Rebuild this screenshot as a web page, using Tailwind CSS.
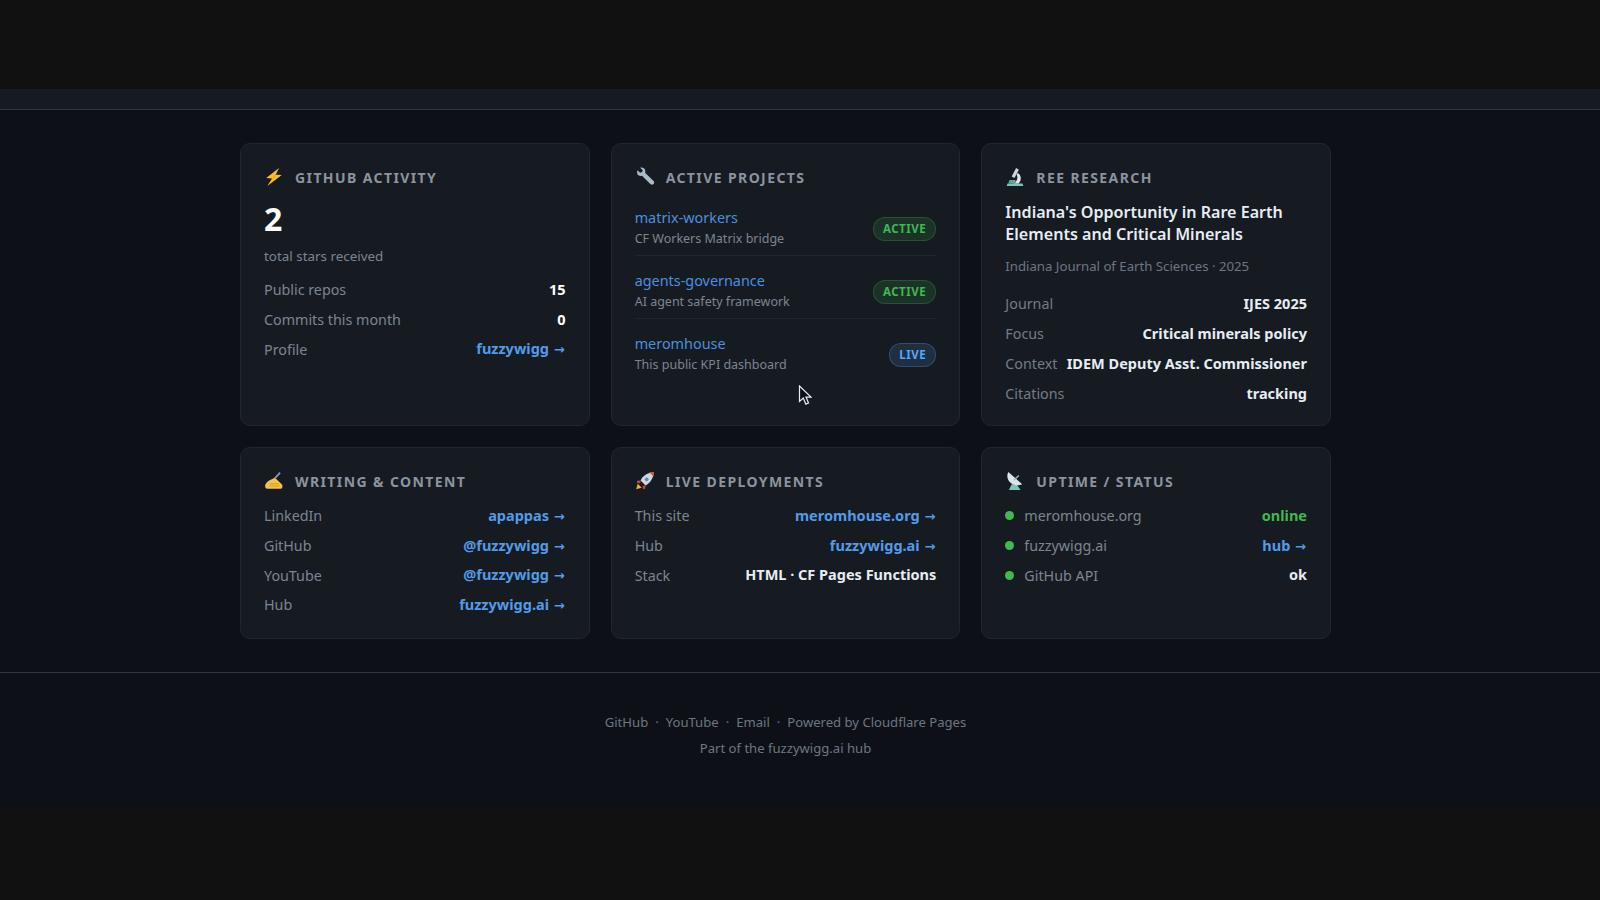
<!DOCTYPE html>
<html lang="en">

<head>
  <meta charset="UTF-8" />
  <title>meromhouse</title>
  <script src="https://cdn.jsdelivr.net/npm/@tailwindcss/browser@4"></script>
</head>

<body class="bg-[#111111] text-[#e6edf3] font-['Noto_Sans',sans-serif] overflow-hidden">

  <!-- Top band -->
  <div class="h-[89px] bg-[#111111]"></div>

  <!-- Header strip -->
  <div class="h-[21px] bg-[#161b22] border-b border-[#30363d]"></div>

  <div class="bg-[#0d1117] h-[700px] relative">

    <!-- Cards -->
    <main class="w-[1091px] ml-[240px] pt-[33px] grid grid-cols-3 gap-x-[21px] gap-y-[21px]">

      <!-- GitHub activity -->
      <section class="h-[283px] bg-[#161b22] border border-[#21262d] rounded-[10px] px-[23px] pt-[23px]">
        <h2 class="flex items-center gap-[11px] h-[20px] text-[14px] font-bold tracking-[1.4px] text-[#8b949e] uppercase">
          <svg class="w-[20px] h-[20px]" viewBox="0 0 18 18"><path d="M13.500 1 2 10l5.200.300L3 17 16 7.300l-5.600-.300z" fill="#f5c02c"/><path d="M13.500 1 7.800 10.500 3 17 9.500 9.300z" fill="#e8971e"/></svg>
          GitHub Activity
        </h2>
        <div class="mt-[14px] h-[36px] leading-[36px] text-[32px] font-bold text-white">2</div>
        <p class="mt-[10px] h-[18px] leading-[18px] text-[13.4px] text-[#7d8590]">total stars received</p>
        <div class="mt-[10px]">
          <div class="flex justify-between items-center h-[29.7px] text-[14.3px]"><span class="text-[#7d8590]">Public repos</span><span class="text-[14.5px] font-bold text-white">15</span></div>
          <div class="flex justify-between items-center h-[29.7px] text-[14.3px]"><span class="text-[#7d8590]">Commits this month</span><span class="text-[14.5px] font-bold text-white">0</span></div>
          <div class="flex justify-between items-center h-[29.7px] text-[14.3px]"><span class="text-[#7d8590]">Profile</span><a href="#" class="text-[14.5px] font-bold text-[#539be8]">fuzzywigg <span class="font-['DejaVu_Sans'] text-[13px] ml-[1px] mr-[1px]">→</span></a></div>
        </div>
      </section>

      <!-- Active projects -->
      <section class="h-[283px] bg-[#161b22] border border-[#21262d] rounded-[10px] px-[23px] pt-[23px]">
        <h2 class="flex items-center gap-[11px] h-[20px] text-[14px] font-bold tracking-[1.4px] text-[#8b949e] uppercase">
          <svg class="w-[20px] h-[20px]" viewBox="0 0 18 18"><path d="M2.200 2.900 4.600 5.200l1.800-.6.600-1.700L4.700.7C6.600.2 8.700 1 9.200 3c.2.8.1 1.500-.1 2.200l7.600 7.300c.8.8.8 2-.1 2.800-.8.8-2 .8-2.800 0L6.300 7.800c-.9.3-2 .3-2.800-.1C1.900 7 1.500 4.600 2.200 2.900z" fill="#a9bcc6"/></svg>
          Active Projects
        </h2>
        <div class="mt-[6px]">
          <div class="h-[63px] border-b border-[#21262d] flex items-center justify-between pt-[8px]">
            <div>
              <a href="#" class="block text-[14.4px] leading-[21px] text-[#4c8fdf]">matrix-workers</a>
              <p class="text-[12.5px] leading-[21px] text-[#7d8590]">CF Workers Matrix bridge</p>
            </div>
            <span class="h-[24px] mt-[1px] px-[9px] flex items-center rounded-full border border-[#3fb950]/25 bg-[#3fb950]/15 text-[#3fb950] text-[11.5px] font-bold tracking-[0.55px]">ACTIVE</span>
          </div>
          <div class="h-[63px] border-b border-[#21262d] flex items-center justify-between pt-[8px]">
            <div>
              <a href="#" class="block text-[14.4px] leading-[21px] text-[#4c8fdf]">agents-governance</a>
              <p class="text-[12.5px] leading-[21px] text-[#7d8590]">AI agent safety framework</p>
            </div>
            <span class="h-[24px] mt-[1px] px-[9px] flex items-center rounded-full border border-[#3fb950]/25 bg-[#3fb950]/15 text-[#3fb950] text-[11.5px] font-bold tracking-[0.55px]">ACTIVE</span>
          </div>
          <div class="h-[63px] border-b border-transparent flex items-center justify-between pt-[8px]">
            <div>
              <a href="#" class="block text-[14.4px] leading-[21px] text-[#4c8fdf]">meromhouse</a>
              <p class="text-[12.5px] leading-[21px] text-[#7d8590]">This public KPI dashboard</p>
            </div>
            <span class="h-[24px] mt-[1px] px-[9px] flex items-center rounded-full border border-[#58a6ff]/25 bg-[#58a6ff]/15 text-[#58a6ff] text-[11.5px] font-bold tracking-[0.55px]">LIVE</span>
          </div>
        </div>
      </section>

      <!-- REE research -->
      <section class="h-[283px] bg-[#161b22] border border-[#21262d] rounded-[10px] px-[23px] pt-[23px]">
        <h2 class="flex items-center gap-[11px] h-[20px] text-[14px] font-bold tracking-[1.4px] text-[#8b949e] uppercase">
          <svg class="w-[20px] h-[20px]" viewBox="0 0 18 18"><path d="M1.500 17h15l-.8-2.200H2.300z" fill="#7fc4b8"/><path d="M10 1 12.500 2.500 8.500 10 6 8.500z" fill="#c9d6da"/><path d="M11.500 5.500c3.500 2 3.500 7 .5 9.300H6.500c3 0 6-4.300 4-7.800z" fill="#dfe8ea"/><path d="M4 11.800h5.500v3H3z" fill="#5fa898"/></svg>
          REE Research
        </h2>
        <h3 class="mt-[15px] text-[16.1px] leading-[21.5px] font-semibold text-[#e6edf3]">Indiana's Opportunity in Rare Earth Elements and Critical Minerals</h3>
        <p class="mt-[11px] h-[20px] leading-[20px] text-[13.2px] text-[#6e7681]">Indiana Journal of Earth Sciences · 2025</p>
        <div class="mt-[13px]">
          <div class="flex justify-between items-center h-[30px] text-[14.3px]"><span class="text-[#737b85]">Journal</span><span class="text-[14.5px] font-bold text-[#e6edf3]">IJES 2025</span></div>
          <div class="flex justify-between items-center h-[30px] text-[14.3px]"><span class="text-[#737b85]">Focus</span><span class="text-[14.5px] font-bold text-[#e6edf3]">Critical minerals policy</span></div>
          <div class="flex justify-between items-center h-[30px] text-[14.3px]"><span class="text-[#737b85]">Context</span><span class="text-[14.5px] font-bold text-[#e6edf3]">IDEM Deputy Asst. Commissioner</span></div>
          <div class="flex justify-between items-center h-[30px] text-[14.3px]"><span class="text-[#737b85]">Citations</span><span class="text-[14.5px] font-bold text-[#e6edf3]">tracking</span></div>
        </div>
      </section>

      <!-- Writing & content -->
      <section class="h-[192px] bg-[#161b22] border border-[#21262d] rounded-[10px] px-[23px] pt-[23px]">
        <h2 class="flex items-center gap-[11px] h-[20px] text-[14px] font-bold tracking-[1.4px] text-[#8b949e] uppercase">
          <svg class="w-[20px] h-[20px]" viewBox="0 0 18 18"><path d="M14.500 1.500 8.500 8" stroke="#8b9aa5" stroke-width="1.500"/><path d="M1 13.500c0-2.500 2.500-4.500 4.500-5.500L9 6.500l2 .8 5 4.700c1 1 .7 4-.7 4H3c-1.300 0-2-1-2-2.500z" fill="#f4c24a"/><path d="M5 11.500h8.500M5 13.500h9" stroke="#cf962c" stroke-width=".8"/></svg>
          Writing &amp; Content
        </h2>
        <div class="mt-[10px]">
          <div class="flex justify-between items-center h-[29.7px] text-[14.3px]"><span class="text-[#7d8590]">LinkedIn</span><a href="#" class="text-[14.5px] font-bold text-[#539be8]">apappas <span class="font-['DejaVu_Sans'] text-[13px] ml-[1px] mr-[1px]">→</span></a></div>
          <div class="flex justify-between items-center h-[29.7px] text-[14.3px]"><span class="text-[#7d8590]">GitHub</span><a href="#" class="text-[14.5px] font-bold text-[#539be8]">@fuzzywigg <span class="font-['DejaVu_Sans'] text-[13px] ml-[1px] mr-[1px]">→</span></a></div>
          <div class="flex justify-between items-center h-[29.7px] text-[14.3px]"><span class="text-[#7d8590]">YouTube</span><a href="#" class="text-[14.5px] font-bold text-[#539be8]">@fuzzywigg <span class="font-['DejaVu_Sans'] text-[13px] ml-[1px] mr-[1px]">→</span></a></div>
          <div class="flex justify-between items-center h-[29.7px] text-[14.3px]"><span class="text-[#7d8590]">Hub</span><a href="#" class="text-[14.5px] font-bold text-[#539be8]">fuzzywigg.ai <span class="font-['DejaVu_Sans'] text-[13px] ml-[1px] mr-[1px]">→</span></a></div>
        </div>
      </section>

      <!-- Live deployments -->
      <section class="h-[192px] bg-[#161b22] border border-[#21262d] rounded-[10px] px-[23px] pt-[23px]">
        <h2 class="flex items-center gap-[11px] h-[20px] text-[14px] font-bold tracking-[1.4px] text-[#8b949e] uppercase">
          <svg class="w-[20px] h-[20px]" viewBox="0 0 18 18"><path d="M2.500 11.500 1 16.500l5-1.500z" fill="#f2b233"/><path d="M5 8.500c2-4 6-7 12-7.500-.5 6-3.500 10-7.500 12z" fill="#cfd8de"/><path d="M13 1.300c1.300-.3 2.700-.4 4-.3 0 1.300 0 2.700-.4 4z" fill="#d8503f"/><circle cx="10.500" cy="7.500" r="1.700" fill="#4f8fd0"/><path d="M5 8.500 2 8.800l-.5 2 3.200.3zM9.500 13l-.3 3-2 .5-.3-3.200z" fill="#c9453a"/></svg>
          Live Deployments
        </h2>
        <div class="mt-[10px]">
          <div class="flex justify-between items-center h-[29.7px] text-[14.3px]"><span class="text-[#7d8590]">This site</span><a href="#" class="text-[14.5px] font-bold text-[#539be8]">meromhouse.org <span class="font-['DejaVu_Sans'] text-[13px] ml-[1px] mr-[1px]">→</span></a></div>
          <div class="flex justify-between items-center h-[29.7px] text-[14.3px]"><span class="text-[#7d8590]">Hub</span><a href="#" class="text-[14.5px] font-bold text-[#539be8]">fuzzywigg.ai <span class="font-['DejaVu_Sans'] text-[13px] ml-[1px] mr-[1px]">→</span></a></div>
          <div class="flex justify-between items-center h-[29.7px] text-[14.3px]"><span class="text-[#7d8590]">Stack</span><span class="text-[14.5px] font-bold text-[#e6edf3]">HTML · CF Pages Functions</span></div>
        </div>
      </section>

      <!-- Uptime -->
      <section class="h-[192px] bg-[#161b22] border border-[#21262d] rounded-[10px] px-[23px] pt-[23px]">
        <h2 class="flex items-center gap-[11px] h-[20px] text-[14px] font-bold tracking-[1.4px] text-[#8b949e] uppercase">
          <svg class="w-[20px] h-[20px]" viewBox="0 0 18 18"><path d="M6 12 3.500 17h10.500l-3.500-5z" fill="#7fc4b8"/><path d="M3 1c-2 3.500-.5 8 2.800 10.200 3 2 6.700 2 9.700.8z" fill="#dbe5e8"/><path d="M8 8l4.500-4" stroke="#9fb0b8" stroke-width="1.200"/></svg>
          Uptime / Status
        </h2>
        <div class="mt-[10px]">
          <div class="flex justify-between items-center h-[29.7px] text-[14.3px]"><span class="flex items-center gap-[10px] text-[#7d8590]"><i class="block w-[9px] h-[9px] rounded-full bg-[#3fb950]"></i>meromhouse.org</span><span class="text-[14.5px] font-bold text-[#3fb950]">online</span></div>
          <div class="flex justify-between items-center h-[29.7px] text-[14.3px]"><span class="flex items-center gap-[10px] text-[#7d8590]"><i class="block w-[9px] h-[9px] rounded-full bg-[#3fb950]"></i>fuzzywigg.ai</span><a href="#" class="text-[14.5px] font-bold text-[#539be8]">hub <span class="font-['DejaVu_Sans'] text-[13px] ml-[1px] mr-[1px]">→</span></a></div>
          <div class="flex justify-between items-center h-[29.7px] text-[14.3px]"><span class="flex items-center gap-[10px] text-[#7d8590]"><i class="block w-[9px] h-[9px] rounded-full bg-[#3fb950]"></i>GitHub API</span><span class="text-[14.5px] font-bold text-[#e6edf3]">ok</span></div>
        </div>
      </section>
    </main>

    <!-- Footer -->
    <footer class="mt-[33px] border-t border-[#30363d] pt-[36px] text-[13.1px] text-[#6e7681]">
      <div class="w-[1091px] ml-[240px] text-center leading-[26px]">
        <div class="flex justify-center gap-[7px]">
          <a href="#">GitHub</a><span>·</span><a href="#">YouTube</a><span>·</span><a href="#">Email</a><span>·</span><span>Powered by Cloudflare Pages</span>
        </div>
        <div>Part of the fuzzywigg.ai hub</div>
      </div>
    </footer>

    <!-- Mouse cursor -->
    <svg class="absolute left-[798px] top-[275px] w-[14px] h-[21px]" viewBox="0 0 14 21"><path d="M1.500 1v15.500l3.800-3.400 2.500 6 2.700-1.100-2.500-5.900h5z" fill="#0d1117" stroke="#e6edf3" stroke-width="1.200"/></svg>
  </div>

</body>
</html>
